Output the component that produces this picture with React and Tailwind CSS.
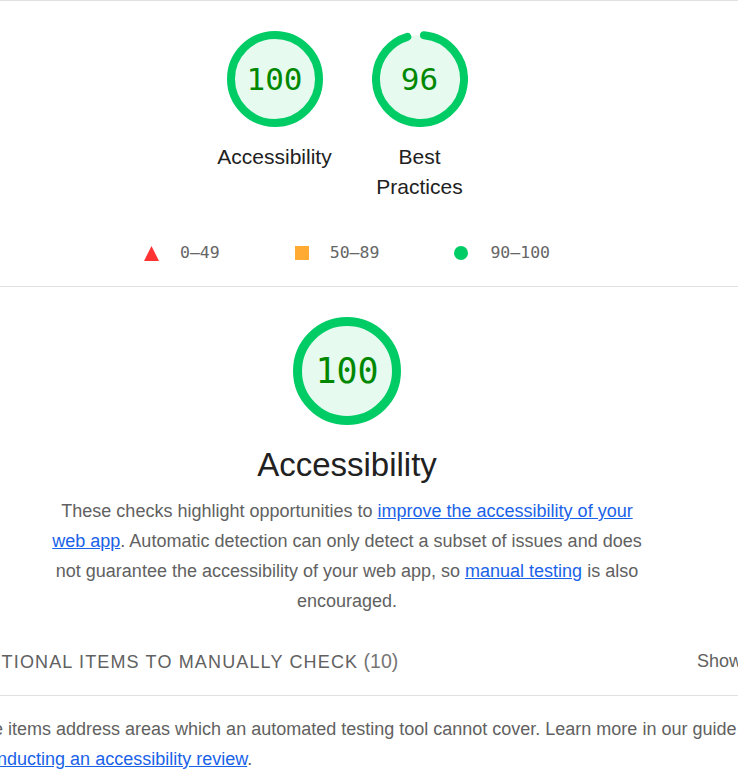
import React from "react";

function Gauge({ size, stroke, value, fontClass }) {
  const r = size / 2 - stroke / 2;
  const c = 2 * Math.PI * r;
  const full = value >= 100;
  const capDeg = ((stroke / 2) / r) * (180 / Math.PI);
  const gapDeg = 12;
  const startDeg = capDeg;
  const endDeg = (value / 100) * 360 - gapDeg - capDeg + 14.4;
  const len = ((endDeg - startDeg) / 360) * c;
  return (
    <div className="relative flex items-center justify-center" style={{ width: size, height: size }}>
      <svg width={size} height={size} viewBox={`0 0 ${size} ${size}`} className="absolute left-0 top-0">
        <circle cx={size / 2} cy={size / 2} r={r} fill="#e6faf0" />
        {full ? (
          <circle cx={size / 2} cy={size / 2} r={r} fill="none" stroke="#00cc66" strokeWidth={stroke} />
        ) : (
          <circle
            cx={size / 2}
            cy={size / 2}
            r={r}
            fill="none"
            stroke="#00cc66"
            strokeWidth={stroke}
            strokeLinecap="round"
            strokeDasharray={`${len} ${c}`}
            transform={`rotate(${-90 + startDeg} ${size / 2} ${size / 2})`}
          />
        )}
      </svg>
      <span className={`relative font-['DejaVu_Sans_Mono',monospace] text-[#008800] ${fontClass}`}>{value}</span>
    </div>
  );
}

function GaugeWrapper({ value, label }) {
  return (
    <div className="w-[120px] flex flex-col items-center">
      <Gauge size={96} stroke={8} value={value} fontClass="text-[31px] leading-none" />
      <div className="mt-[15px] text-[21px] leading-[30px] text-center text-[#212121]">{label}</div>
    </div>
  );
}

export default function App() {
  return (
    <div className="w-[738px] h-[772px] overflow-hidden bg-white font-['Liberation_Sans',Arial,sans-serif]">
      <div className="border-t border-[#e0e0e0]">
        <div className="w-[694px] flex justify-center items-start gap-[25px] pt-[30px]">
          <GaugeWrapper value={100} label="Accessibility" />
          <GaugeWrapper value={96} label="Best Practices" />
        </div>
        <div className="w-[694px] flex justify-center mt-[41px]">
          <div className="flex items-center gap-[75px] h-[20px] font-['DejaVu_Sans_Mono',monospace] text-[16.5px] text-[#666666]">
            <div className="flex items-center">
              <svg width="15" height="15" viewBox="0 0 15 15">
                <polygon points="7.5,0 15,15 0,15" fill="#ff3333" />
              </svg>
              <span className="ml-[21px] leading-[20px]">0–49</span>
            </div>
            <div className="flex items-center">
              <div className="w-[14px] h-[14px] bg-[#ffaa33]" />
              <span className="ml-[21px] leading-[20px]">50–89</span>
            </div>
            <div className="flex items-center">
              <div className="w-[14px] h-[14px] rounded-full bg-[#00cc66]" />
              <span className="ml-[22px] leading-[20px]">90–100</span>
            </div>
          </div>
        </div>
      </div>
      <div className="mt-[23px] border-t border-[#e0e0e0]" />
      <div className="ml-[-44px] w-[782px] flex flex-col items-center pt-[30px]">
        <Gauge size={108} stroke={9} value={100} fontClass="text-[35px] leading-none" />
        <div className="mt-[20px] text-[33px] leading-[40px] text-[#212121]">Accessibility</div>
        <p className="mt-[11px] max-w-[600px] text-center text-[18px] leading-[30px] text-[#616161]">
          These checks highlight opportunities to{" "}
          <a className="text-[#1a62e8] underline">improve the accessibility of your web app</a>. Automatic
          detection can only detect a subset of issues and does not guarantee the accessibility of your web app,
          so <a className="text-[#1a62e8] underline">manual testing</a> is also encouraged.
        </p>
      </div>
      <div className="ml-[-46px] w-[788px] mt-[30px] pb-[19px] flex justify-between items-center h-[49px]">
        <div className="text-[18px] leading-[30px] text-[#616161]">
          <span className="uppercase tracking-[1.15px]">Additional items to manually check</span>
          <span className="text-[19.5px] text-[#757575]"> (10)</span>
        </div>
        <div className="text-[18px] leading-[30px] text-[#616161]">Show</div>
      </div>
      <div className="border-t border-[#e0e0e0]" />
      <p className="ml-[-47px] w-[792px] mt-[18px] text-[18px] leading-[30px] text-[#616161]">
        These items address areas which an automated testing tool cannot cover. Learn more in our guide on{" "}
        <a className="text-[#1a62e8] underline">conducting an accessibility review</a>.
      </p>
    </div>
  );
}
